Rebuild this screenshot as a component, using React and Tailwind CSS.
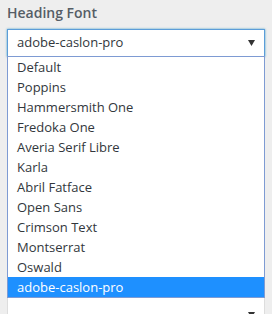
import React from 'react'

const fonts = [
  'Default',
  'Poppins',
  'Hammersmith One',
  'Fredoka One',
  'Averia Serif Libre',
  'Karla',
  'Abril Fatface',
  'Open Sans',
  'Crimson Text',
  'Montserrat',
  'Oswald',
  'adobe-caslon-pro',
]

function Arrow() {
  return (
    <svg width="7" height="6" viewBox="0 0 7 6" className="shrink-0">
      <path d="M0 0h7L3.5 6z" fill="#333" />
    </svg>
  )
}

export default function App() {
  const selected = 'adobe-caslon-pro'
  return (
    <div
      className="relative h-[314px] w-[272px] overflow-hidden bg-[#eeeeee] text-[#32373c]"
      style={{ fontFamily: '"Open Sans", "Noto Sans", sans-serif' }}
    >
      <div className="px-[7px] pt-px">
        <div className="text-[14px] font-semibold leading-[24px] text-[#555d66]">Heading Font</div>
        <div className="mt-[4px] flex h-[28px] items-center justify-between border border-[#5b9dd9] bg-white pl-[9px] pr-[9px] text-[13px] shadow-[0_0_2px_rgba(30,140,190,0.8)]">
          <span>{selected}</span>
          <Arrow />
        </div>
        <div className="h-[237px]" />
        <div className="flex h-[28px] items-center justify-end border border-[#ddd] bg-white pr-[9px] pt-[14px]">
          <Arrow />
        </div>
      </div>

      <ul className="absolute left-[7px] top-[56px] w-[258px] border border-[#7e9bd3] bg-white text-[13px]">
        {fonts.map((f) => (
          <li
            key={f}
            className={
              f === selected
                ? 'h-[20px] bg-[#1e90ff] pl-[9px] leading-[20px] text-white'
                : 'h-[20px] pl-[9px] leading-[20px]'
            }
          >
            {f}
          </li>
        ))}
      </ul>
    </div>
  )
}
